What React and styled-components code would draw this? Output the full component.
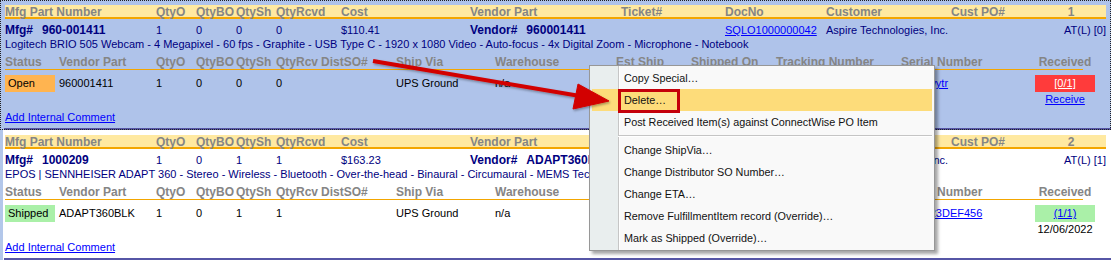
import React from 'react';
import styled, { createGlobalStyle } from 'styled-components';

const GlobalStyle = createGlobalStyle`
  html, body {
    margin: 0;
    padding: 0;
    background: #ffffff;
  }
  body {
    font-family: "Liberation Sans", Arial, sans-serif;
    font-size: 11px;
    color: #000;
  }
`;

const TOP_COLS = '151px 40px 40px 40px 65px 129px 151px 104px 101px 125px 85px 70px';
const SUB_COLS = '54px 97px 40px 40px 40px 45px 75px 99px 121px 75px 85px 125px 134px 60px';

const items = [
  {
    selected: true,
    index: 1,
    mfg: '960-001411',
    qty: [1, 0, 0, 0],
    cost: '$110.41',
    vendor: '960001411',
    docNo: 'SQLO1000000042',
    customer: 'Aspire Technologies, Inc.',
    tag: 'AT(L) [0]',
    desc: 'Logitech BRIO 505 Webcam - 4 Megapixel - 60 fps - Graphite - USB Type C - 1920 x 1080 Video - Auto-focus - 4x Digital Zoom - Microphone - Notebook',
    status: 'Open',
    vendorPart: '960001411',
    shipQty: [1, 0, 0, 0],
    shipVia: 'UPS Ground',
    warehouse: 'n/a',
    serial: 'asdfqwytr',
    received: '[0/1]',
    full: false,
  },
  {
    selected: false,
    index: 2,
    mfg: '1000209',
    qty: [1, 0, 1, 1],
    cost: '$163.23',
    vendor: 'ADAPT360BLK',
    docNo: 'SQLO1000000043',
    customer: 'Aspire Technologies, Inc.',
    tag: 'AT(L) [1]',
    desc: 'EPOS | SENNHEISER ADAPT 360 - Stereo - Wireless - Bluetooth - Over-the-head - Binaural - Circumaural - MEMS Technology - Noise Canceling - USB Type C',
    status: 'Shipped',
    vendorPart: 'ADAPT360BLK',
    shipQty: [1, 0, 1, 1],
    shipVia: 'UPS Ground',
    warehouse: 'n/a',
    serial: 'ABC123DEF456',
    received: '(1/1)',
    full: true,
    date: '12/06/2022',
  },
];

const menuItems = [
  { label: 'Copy Special…' },
  { label: 'Delete…', active: true, callout: true },
  { label: 'Post Received Item(s) against ConnectWise PO Item' },
  { separator: true },
  { label: 'Change ShipVia…' },
  { label: 'Change Distributor SO Number…' },
  { label: 'Change ETA…' },
  { label: 'Remove FulfillmentItem record (Override)…' },
  { label: 'Mark as Shipped (Override)…' },
];

const Page = styled.div`
  position: relative;
  width: 1111px;
  height: 263px;
  overflow: hidden;
  background: #ffffff;
`;

const Item = styled.div`
  display: flex;
  flex-direction: column;
  box-sizing: border-box;
  height: 130px;
  padding: 5px 5px 0 5px;
  background: ${p => (p.$selected ? '#afc3ea' : '#ffffff')};
  outline: ${p => (p.$selected ? '1px dotted #202020' : 'none')};
  outline-offset: -1px;
  box-shadow: ${p => (p.$selected ? 'none' : 'inset 3px 0 0 #b3c7ea')};
`;

const HeaderRow = styled.div`
  display: grid;
  grid-template-columns: ${TOP_COLS};
  height: 12px;
  line-height: 14px;
  background: #ffe9a1;
  border-bottom: 2px solid #f3a600;
  color: #858585;
  font-size: 12px;
  font-weight: bold;
  white-space: nowrap;
`;

const MainRow = styled.div`
  display: grid;
  grid-template-columns: ${TOP_COLS};
  margin-top: 4px;
  line-height: 14px;
  color: #000080;
  white-space: nowrap;
`;

const Cell = styled.div`
  grid-column: span ${p => p.$span || 1};
  text-align: ${p => p.$align || 'left'};
`;

const Key = styled.span`
  font-size: 12px;
  font-weight: bold;
  margin-right: 9px;
`;

const Strong = styled.span`
  font-size: 12px;
  font-weight: bold;
`;

const Description = styled.div`
  line-height: 14px;
  color: #000080;
  white-space: nowrap;
`;

const SubHeader = styled.div`
  display: grid;
  grid-template-columns: ${SUB_COLS};
  width: 1078px;
  margin-top: 4px;
  line-height: 14px;
  border-bottom: 1px solid #f3a600;
  color: #858585;
  font-size: 12px;
  font-weight: bold;
  white-space: nowrap;
`;

const DataRow = styled.div`
  display: grid;
  grid-template-columns: ${SUB_COLS};
  align-items: start;
  height: 31px;
  margin-top: 5px;
  line-height: 16px;
  white-space: nowrap;
`;

const StatusBadge = styled.div`
  box-sizing: border-box;
  width: 50px;
  height: 17px;
  padding-left: 3px;
  background: ${p => (p.$tone === 'open' ? '#ffb450' : '#aaf0a8')};
`;

const ReceivedCell = styled.div`
  display: flex;
  flex-direction: column;
  align-items: center;
`;

const ReceivedBadge = styled.div`
  width: 60px;
  height: 17px;
  text-align: center;
  background: ${p => (p.$full ? '#aaf0a8' : '#ff3b3b')};
`;

const SubLine = styled.div`
  line-height: 14px;
`;

const Link = styled.a`
  color: ${p => (p.$light ? '#ffffff' : '#0000ff')};
  text-decoration: underline;
  cursor: pointer;
`;

const CommentLink = styled(Link)`
  align-self: flex-start;
  margin-top: 4px;
  line-height: 14px;
`;

const Divider = styled.div`
  flex-shrink: 0;
  height: 2px;
  margin: auto -5px 0 -1px;
  background: #5656a6;
`;

const Menu = styled.div`
  position: absolute;
  left: 589px;
  top: 65px;
  z-index: 2;
  box-sizing: border-box;
  width: 346px;
  padding: 1px 2px;
  border: 1px solid #979797;
  background: linear-gradient(
    to right,
    #e9eeee 0,
    #e9eeee 28px,
    #c6c6c6 28px,
    #c6c6c6 29px,
    #ffffff 29px,
    #ffffff 30px,
    #f9f9f9 30px
  );
  box-shadow: 3px 3px 3px rgba(0, 0, 0, 0.35);
  font-family: "Liberation Sans", Arial, sans-serif;
  font-size: 10.8px;
  color: #111;
  white-space: nowrap;
`;

const MenuItem = styled.div`
  position: relative;
  height: 22px;
  line-height: 22px;
  padding-left: 32px;
  background: ${p => (p.$active ? '#fddc7a' : 'transparent')};
`;

const MenuSeparator = styled.div`
  height: 6px;
  margin-left: 26px;
  background: linear-gradient(
    to bottom,
    transparent 2px,
    #c5c5c5 2px,
    #c5c5c5 3px,
    #ffffff 3px,
    #ffffff 4px,
    transparent 4px
  );
`;

const Callout = styled.span`
  position: absolute;
  left: 26px;
  top: 0;
  width: 62px;
  height: 24px;
  box-sizing: border-box;
  border: 3px solid #c4000a;
`;

const Overlay = styled.svg`
  position: absolute;
  left: 0;
  top: 0;
  z-index: 3;
  pointer-events: none;
`;

function LineItem({ item }) {
  return (
    <Item $selected={item.selected}>
      <HeaderRow>
        <Cell>Mfg Part Number</Cell>
        <Cell>QtyO</Cell>
        <Cell>QtyBO</Cell>
        <Cell>QtySh</Cell>
        <Cell>QtyRcvd</Cell>
        <Cell>Cost</Cell>
        <Cell>Vendor Part</Cell>
        <Cell>Ticket#</Cell>
        <Cell>DocNo</Cell>
        <Cell>Customer</Cell>
        <Cell>Cust PO#</Cell>
        <Cell $align="center">{item.index}</Cell>
      </HeaderRow>
      <MainRow>
        <Cell>
          <Key>Mfg#</Key>
          <Strong>{item.mfg}</Strong>
        </Cell>
        {item.qty.map((q, i) => (
          <Cell key={i}>{q}</Cell>
        ))}
        <Cell>{item.cost}</Cell>
        <Cell $span={2}>
          <Key>Vendor#</Key>
          <Strong>{item.vendor}</Strong>
        </Cell>
        <Cell>
          <Link>{item.docNo}</Link>
        </Cell>
        <Cell>{item.customer}</Cell>
        <Cell $span={2} $align="right">{item.tag}</Cell>
      </MainRow>
      <Description>{item.desc}</Description>
      <SubHeader>
        <Cell>Status</Cell>
        <Cell>Vendor Part</Cell>
        <Cell>QtyO</Cell>
        <Cell>QtyBO</Cell>
        <Cell>QtySh</Cell>
        <Cell>QtyRcv</Cell>
        <Cell>DistSO#</Cell>
        <Cell>Ship Via</Cell>
        <Cell>Warehouse</Cell>
        <Cell>Est Ship</Cell>
        <Cell>Shipped On</Cell>
        <Cell>Tracking Number</Cell>
        <Cell>Serial Number</Cell>
        <Cell $align="center">Received</Cell>
      </SubHeader>
      <DataRow>
        <StatusBadge $tone={item.full ? 'shipped' : 'open'}>{item.status}</StatusBadge>
        <Cell>{item.vendorPart}</Cell>
        {item.shipQty.map((q, i) => (
          <Cell key={i}>{q}</Cell>
        ))}
        <Cell />
        <Cell>{item.shipVia}</Cell>
        <Cell>{item.warehouse}</Cell>
        <Cell />
        <Cell />
        <Cell />
        <Cell>
          <Link>{item.serial}</Link>
        </Cell>
        <ReceivedCell>
          <ReceivedBadge $full={item.full}>
            <Link $light={!item.full}>{item.received}</Link>
          </ReceivedBadge>
          <SubLine>{item.full ? item.date : <Link>Receive</Link>}</SubLine>
        </ReceivedCell>
      </DataRow>
      <CommentLink>Add Internal Comment</CommentLink>
      <Divider />
    </Item>
  );
}

function ContextMenu() {
  return (
    <Menu>
      {menuItems.map((m, i) =>
        m.separator ? (
          <MenuSeparator key={i} />
        ) : (
          <MenuItem key={i} $active={m.active}>
            {m.label}
            {m.callout && <Callout />}
          </MenuItem>
        )
      )}
    </Menu>
  );
}

function Arrow() {
  return (
    <Overlay width="1111" height="263" viewBox="0 0 1111 263">
      <defs>
        <filter id="arrowShadow" x="-10%" y="-50%" width="120%" height="200%">
          <feDropShadow dx="1" dy="1.5" stdDeviation="1" floodColor="#000" floodOpacity="0.35" />
        </filter>
      </defs>
      <g filter="url(#arrowShadow)" fill="#d20000" stroke="#d20000">
        <line x1="373" y1="61" x2="580" y2="96" strokeWidth="4" />
        <polygon points="609,101 578,84 573,109" strokeWidth="1" strokeLinejoin="round" />
      </g>
    </Overlay>
  );
}

export default function App() {
  return (
    <>
      <GlobalStyle />
      <Page>
        {items.map(item => (
          <LineItem key={item.index} item={item} />
        ))}
        <ContextMenu />
        <Arrow />
      </Page>
    </>
  );
}
